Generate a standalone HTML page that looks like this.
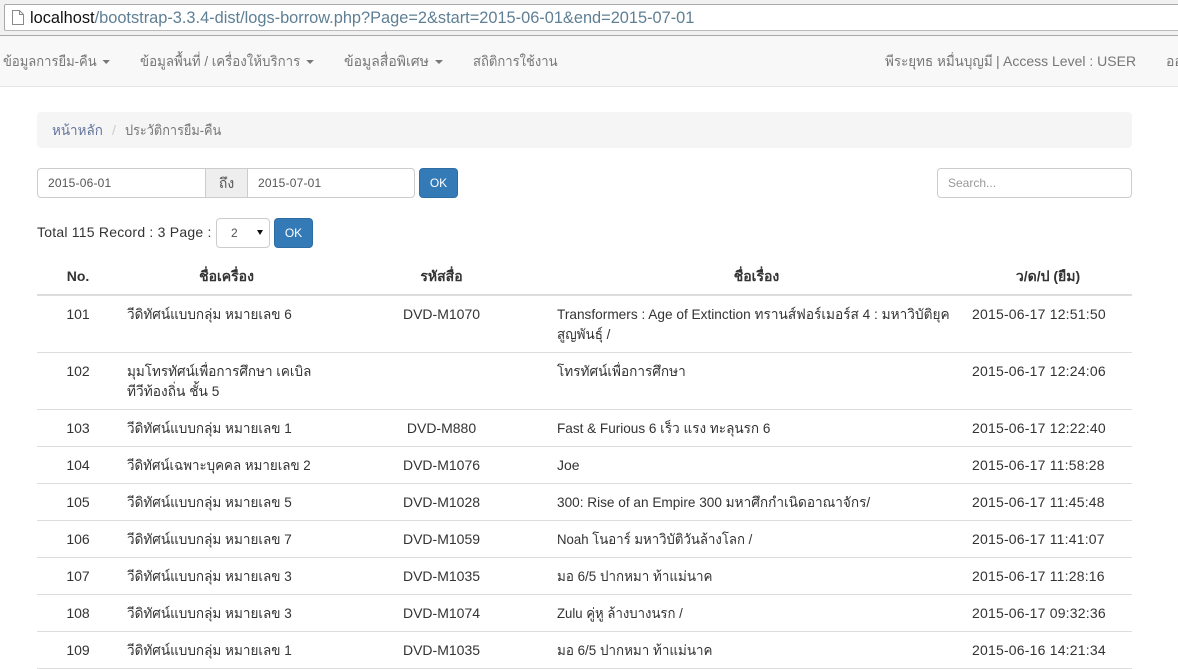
<!DOCTYPE html>
<html><head><meta charset="utf-8"><style>
*{box-sizing:border-box}
html,body{margin:0;padding:0;width:1178px;height:669px;overflow:hidden;background:#fff}
body{position:relative;font-family:"Liberation Sans",sans-serif;font-size:14px;color:#333}
.a{position:absolute;white-space:nowrap;line-height:20px;transform-origin:0 50%}
.h{position:absolute;left:37px;width:1095px;height:1px;background:#ddd}
.c{text-align:center}
.d{letter-spacing:.2px}
.btn{position:absolute;background:#337ab7;border:1px solid #2e6da4;border-radius:4px;color:#fff;width:39px;height:30px;line-height:28px;text-align:center;font-size:12px}
.inp{position:absolute;background:#fff;border:1px solid #ccc;height:30px;font-size:12px;line-height:28px;color:#555;padding-left:10px}
.n{color:#777}
.car{display:inline-block;width:0;height:0;border-top:4px solid #777;border-left:4px solid transparent;border-right:4px solid transparent;vertical-align:middle;margin-left:2px}
</style></head><body>
<div style="position:absolute;left:0;top:0;width:1178px;height:36px;background:#f1f1f1"></div>
<div style="position:absolute;left:4px;top:4px;width:1174px;height:27px;background:#fff;border:1px solid #a9a9a9;border-right:0;border-radius:2px 0 0 2px;border-bottom-color:#bbb"></div>
<svg style="position:absolute;left:12px;top:10px" width="12" height="15" viewBox="0 0 12 15"><path d="M.5 .5H7.5L11.5 4.5V14.5H.5Z M7.5 .5V4.5H11.5" fill="#fff" stroke="#8a8a8a"/></svg>
<div class="a" style="left:30px;top:8px;font-size:16.38px;color:#5f7f95"><span style="color:#111">localhost</span>/bootstrap-3.3.4-dist/logs-borrow.php?Page=2&amp;start=2015-06-01&amp;end=2015-07-01</div>
<div style="position:absolute;left:0;top:35px;width:1178px;height:52px;background:#f8f8f8;border-top:1px solid #a9a9a9;border-bottom:1px solid #e7e7e7"></div>
<div class="a n" style="left:3px;top:51px;transform:scaleX(.93)">ข้อมูลการยืม-คืน <span class="car"></span></div>
<div class="a n" style="left:140px;top:51px;transform:scaleX(.95)">ข้อมูลพื้นที่ / เครื่องให้บริการ <span class="car"></span></div>
<div class="a n" style="left:344px;top:51px">ข้อมูลสื่อพิเศษ <span class="car"></span></div>
<div class="a n" style="left:473px;top:51px;transform:scaleX(.933)">สถิติการใช้งาน</div>
<div class="a n" style="left:885px;top:51px;transform:scaleX(.96)">พีระยุทธ หมื่นบุญมี</div>
<div class="a n" style="left:996px;top:51px">|</div>
<div class="a n" style="left:1003px;top:51px">Access Level : USER</div>
<div class="a n" style="left:1166px;top:51px;width:12px;overflow:hidden">ออกจากระบบ</div>
<div style="position:absolute;left:37px;top:112px;width:1095px;height:36px;background:#f5f5f5;border-radius:4px"></div>
<div class="a" style="left:52px;top:120px;color:#64749c;transform:scaleX(.96)">หน้าหลัก</div>
<div class="a" style="left:112px;top:120px;color:#ccc">/</div>
<div class="a" style="left:125px;top:120px;color:#777;transform:scaleX(.91)">ประวัติการยืม-คืน</div>
<div class="inp d" style="left:37px;top:168px;width:169px;border-radius:4px 0 0 4px">2015-06-01</div>
<div class="inp" style="left:205px;top:168px;width:43px;background:#eee;text-align:center;padding:0;font-size:14px">ถึง</div>
<div class="inp d" style="left:247px;top:168px;width:168px;border-radius:0 4px 4px 0">2015-07-01</div>
<div class="btn" style="left:419px;top:168px">OK</div>
<div class="inp" style="left:937px;top:168px;width:195px;border-radius:4px;color:#999">Search...</div>
<div class="a" style="left:37px;top:222px;letter-spacing:.22px">Total 115 Record : 3 Page :</div>
<div class="inp" style="left:216px;top:218px;width:54px;border-radius:4px;padding-left:14px">2<span style="position:absolute;left:40px;top:11px;width:0;height:0;border-top:5px solid #111;border-left:3px solid transparent;border-right:3px solid transparent"></span></div>
<div class="btn" style="left:274px;top:218px">OK</div>

<div class="a c" style="left:37px;width:82px;top:266px;font-weight:bold">No.</div>
<div class="a c" style="left:119px;width:215px;top:266px;font-weight:bold">ชื่อเครื่อง</div>
<div class="a c" style="left:334px;width:215px;top:266px;font-weight:bold">รหัสสื่อ</div>
<div class="a c" style="left:549px;width:415px;top:266px;font-weight:bold">ชื่อเรื่อง</div>
<div class="a c" style="left:964px;width:168px;top:266px;font-weight:bold">ว/ด/ป (ยืม)</div>
<div class="h" style="top:294px;height:2px"></div>

<div class="a c" style="left:37px;width:82px;top:304px">101</div>
<div class="a" style="left:127px;top:304px;transform:scaleX(.965)">วีดิทัศน์แบบกลุ่ม หมายเลข 6</div>
<div class="a c" style="left:334px;width:215px;top:304px">DVD-M1070</div>
<div class="a" style="left:557px;top:304px;transform:scaleX(.975)">Transformers : Age of Extinction ทรานส์ฟอร์เมอร์ส 4 : มหาวิบัติยุค</div>
<div class="a" style="left:557px;top:324px;transform:scaleX(.96)">สูญพันธุ์ /</div>
<div class="a d" style="left:972px;top:304px">2015-06-17 12:51:50</div>
<div class="h" style="top:352px"></div>

<div class="a c" style="left:37px;width:82px;top:361px">102</div>
<div class="a" style="left:127px;top:361px;transform:scaleX(.963)">มุมโทรทัศน์เพื่อการศึกษา เคเบิล</div>
<div class="a" style="left:127px;top:381px;transform:scaleX(.98)">ทีวีท้องถิ่น ชั้น 5</div>
<div class="a" style="left:557px;top:361px;transform:scaleX(.97)">โทรทัศน์เพื่อการศึกษา</div>
<div class="a d" style="left:972px;top:361px">2015-06-17 12:24:06</div>
<div class="h" style="top:409px"></div>

<div class="a c" style="left:37px;width:82px;top:418px">103</div>
<div class="a" style="left:127px;top:418px;transform:scaleX(.965)">วีดิทัศน์แบบกลุ่ม หมายเลข 1</div>
<div class="a c" style="left:334px;width:215px;top:418px">DVD-M880</div>
<div class="a" style="left:557px;top:418px;transform:scaleX(.968)">Fast &amp; Furious 6 เร็ว แรง ทะลุนรก 6</div>
<div class="a d" style="left:972px;top:418px">2015-06-17 12:22:40</div>
<div class="h" style="top:446px"></div>

<div class="a c" style="left:37px;width:82px;top:455px">104</div>
<div class="a" style="left:127px;top:455px;transform:scaleX(.953)">วีดิทัศน์เฉพาะบุคคล หมายเลข 2</div>
<div class="a c" style="left:334px;width:215px;top:455px">DVD-M1076</div>
<div class="a" style="left:557px;top:455px">Joe</div>
<div class="a d" style="left:972px;top:455px">2015-06-17 11:58:28</div>
<div class="h" style="top:483px"></div>

<div class="a c" style="left:37px;width:82px;top:492px">105</div>
<div class="a" style="left:127px;top:492px;transform:scaleX(.965)">วีดิทัศน์แบบกลุ่ม หมายเลข 5</div>
<div class="a c" style="left:334px;width:215px;top:492px">DVD-M1028</div>
<div class="a" style="left:557px;top:492px;transform:scaleX(.972)">300: Rise of an Empire 300 มหาศึกกำเนิดอาณาจักร/</div>
<div class="a d" style="left:972px;top:492px">2015-06-17 11:45:48</div>
<div class="h" style="top:520px"></div>

<div class="a c" style="left:37px;width:82px;top:529px">106</div>
<div class="a" style="left:127px;top:529px;transform:scaleX(.965)">วีดิทัศน์แบบกลุ่ม หมายเลข 7</div>
<div class="a c" style="left:334px;width:215px;top:529px">DVD-M1059</div>
<div class="a" style="left:557px;top:529px;transform:scaleX(.942)">Noah โนอาร์ มหาวิบัติวันล้างโลก /</div>
<div class="a d" style="left:972px;top:529px">2015-06-17 11:41:07</div>
<div class="h" style="top:557px"></div>

<div class="a c" style="left:37px;width:82px;top:566px">107</div>
<div class="a" style="left:127px;top:566px;transform:scaleX(.965)">วีดิทัศน์แบบกลุ่ม หมายเลข 3</div>
<div class="a c" style="left:334px;width:215px;top:566px">DVD-M1035</div>
<div class="a" style="left:557px;top:566px;transform:scaleX(.957)">มอ 6/5 ปากหมา ท้าแม่นาค</div>
<div class="a d" style="left:972px;top:566px">2015-06-17 11:28:16</div>
<div class="h" style="top:594px"></div>

<div class="a c" style="left:37px;width:82px;top:603px">108</div>
<div class="a" style="left:127px;top:603px;transform:scaleX(.965)">วีดิทัศน์แบบกลุ่ม หมายเลข 3</div>
<div class="a c" style="left:334px;width:215px;top:603px">DVD-M1074</div>
<div class="a" style="left:557px;top:603px;transform:scaleX(.94)">Zulu คู่หู ล้างบางนรก /</div>
<div class="a d" style="left:972px;top:603px">2015-06-17 09:32:36</div>
<div class="h" style="top:631px"></div>

<div class="a c" style="left:37px;width:82px;top:640px">109</div>
<div class="a" style="left:127px;top:640px;transform:scaleX(.965)">วีดิทัศน์แบบกลุ่ม หมายเลข 1</div>
<div class="a c" style="left:334px;width:215px;top:640px">DVD-M1035</div>
<div class="a" style="left:557px;top:640px;transform:scaleX(.957)">มอ 6/5 ปากหมา ท้าแม่นาค</div>
<div class="a d" style="left:972px;top:640px">2015-06-16 14:21:34</div>
<div class="h" style="top:668px"></div>
</body></html>
